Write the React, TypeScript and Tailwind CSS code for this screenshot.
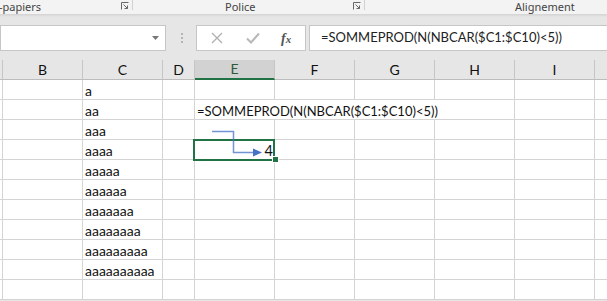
import React from "react";

const cols = ["A", "B", "C", "D", "E", "F", "G", "H", "I", "J"];
const data: Record<number, string> = {
  1: "a",
  2: "aa",
  3: "aaa",
  4: "aaaa",
  5: "aaaaa",
  6: "aaaaaa",
  7: "aaaaaaa",
  8: "aaaaaaaa",
  9: "aaaaaaaaa",
  10: "aaaaaaaaaa",
};
const FORMULA = "=SOMMEPROD(N(NBCAR($C1:$C10)<5))";

function Launcher() {
  return (
    <svg width="8" height="8" viewBox="0 0 8 8" className="block">
      <path d="M0.5 7.5V0.5H7.5" fill="none" stroke="#666" strokeWidth="1" />
      <path d="M2.5 2.5L6.5 6.5M6.5 3.5V6.5H3.5" fill="none" stroke="#666" strokeWidth="1" />
    </svg>
  );
}

export default function App() {
  const rows = Array.from({ length: 11 }, (_, i) => i + 1);
  return (
    <div
      className="w-[607px] h-[301px] overflow-hidden bg-[#e6e6e6] flex flex-col"
      style={{ fontFamily: "Lato, 'Liberation Sans', sans-serif" }}
    >
      {/* ribbon labels */}
      <div
        className="h-[14px] bg-[#f3f3f3] flex text-[11px] leading-[13px] text-[#444]"
        style={{ fontFamily: "'Noto Sans', sans-serif" }}
      >
        <div className="w-[132px] flex items-start">
          <span className="-ml-[1px]">-papiers</span>
          <div className="ml-auto mr-[3px] mt-[2px]">
            <Launcher />
          </div>
        </div>
        <div className="w-px h-[10px] bg-[#d0d0d0]" />
        <div className="w-[231px] flex items-start">
          <span className="ml-[92px]">Police</span>
          <div className="ml-auto mr-[3px] mt-[2px]">
            <Launcher />
          </div>
        </div>
        <div className="w-px h-[10px] bg-[#d0d0d0]" />
        <div className="flex-1 flex items-start">
          <span className="ml-[150px]">Alignement</span>
        </div>
      </div>
      <div className="h-[3px] bg-gradient-to-b from-[#d2d2d2] to-[#e6e6e6]" />
      {/* formula bar */}
      <div className="h-[43px] flex items-start pt-[8px]">
        <div className="w-[166px] h-[26px] bg-white border border-[#c6c6c6] flex items-center justify-end pr-[6px]">
          <svg width="7" height="4" viewBox="0 0 7 4">
            <path d="M0 0H7L3.5 4Z" fill="#777" />
          </svg>
        </div>
        <div className="w-[30px] h-[26px] flex flex-col items-center justify-center gap-[2px] pl-[1px]">
          <div className="w-[2px] h-[2px] bg-[#b4b4b4]" />
          <div className="w-[2px] h-[2px] bg-[#b4b4b4]" />
          <div className="w-[2px] h-[2px] bg-[#b4b4b4]" />
        </div>
        <div className="w-[110px] h-[26px] bg-white border border-[#c6c6c6] flex items-center">
          <svg width="12" height="12" viewBox="0 0 12 12" className="ml-[14px]">
            <path d="M1 1L11 11M11 1L1 11" stroke="#b0b0b0" strokeWidth="1.3" />
          </svg>
          <svg width="14" height="12" viewBox="0 0 14 12" className="ml-[23px]">
            <path d="M1 6.5L5 10.5L13 1.5" fill="none" stroke="#b8b8b8" strokeWidth="2" />
          </svg>
          <span
            className="ml-[21px] text-[14px] italic font-semibold text-[#555]"
            style={{ fontFamily: "'Liberation Serif', serif" }}
          >
            f<span className="text-[11px]">x</span>
          </span>
        </div>
        <div className="w-[3px]" />
        <div className="flex-1 h-[26px] bg-white border border-[#c6c6c6] border-r-0 flex items-center pl-[11px] text-[13px] text-[#222] whitespace-nowrap">
          {FORMULA}
        </div>
      </div>
      {/* grid */}
      <div className="relative">
        <div className="grid grid-cols-[3px_80px_80px_32px_80px_80px_80px_80px_80px_15px] text-[14px] text-[#111]">
          {cols.map((c) => (
            <div
              key={"h" + c}
              className={
                "h-[20px] text-center border-r border-[#c6c6c6] " +
                (c === "E"
                  ? "bg-[#d2d2d2] text-[#2f5a3a] border-b-2 border-b-[#217346] leading-[18px]"
                  : "border-b border-b-[#bcbcbc] bg-[#e6e6e6] leading-[19px]")
              }
            >
              {c === "A" || c === "J" ? "" : c}
            </div>
          ))}
          {rows.map((r) =>
            cols.map((c) => {
              const noRight = r === 2 && (c === "E" || c === "F" || c === "G");
              let content: React.ReactNode = null;
              if (c === "C" && data[r]) content = <span className="pl-[2px]">{data[r]}</span>;
              if (c === "E" && r === 2)
                content = (
                  <span className="pl-[2px] whitespace-nowrap relative z-10 text-[13px]">{FORMULA}</span>
                );
              if (c === "E" && r === 4)
                content = <span className="block text-right pr-[1px] text-[14.5px]">4</span>;
              return (
                <div
                  key={c + r}
                  className={
                    "h-[20px] leading-[21px] bg-white border-b border-[#d4d4d4] whitespace-nowrap " +
                    (noRight ? "" : "border-r ") +
                    (c === "C" || (c === "E" && r === 2) ? "overflow-visible" : "overflow-hidden")
                  }
                >
                  {content}
                </div>
              );
            })
          )}
        </div>
        {/* selected cell */}
        <div className="absolute left-[193px] top-[79px] w-[82px] h-[22px] border-2 border-[#217346]" />
        <div className="absolute left-[272px] top-[96px] w-[5px] h-[5px] bg-[#217346] border border-white box-content -m-[0.5px]" />
        {/* trace arrow */}
        <svg className="absolute left-0 top-0" width="607" height="240" viewBox="0 0 607 240">
          <path
            d="M212 71.5H233.5V92.5H254"
            fill="none"
            stroke="#4472c4"
            strokeOpacity="0.75"
            strokeWidth="1.5"
          />
          <path d="M253 88.5L262 92.5L253 96.5Z" fill="#4472c4" />
        </svg>
      </div>
    </div>
  );
}
